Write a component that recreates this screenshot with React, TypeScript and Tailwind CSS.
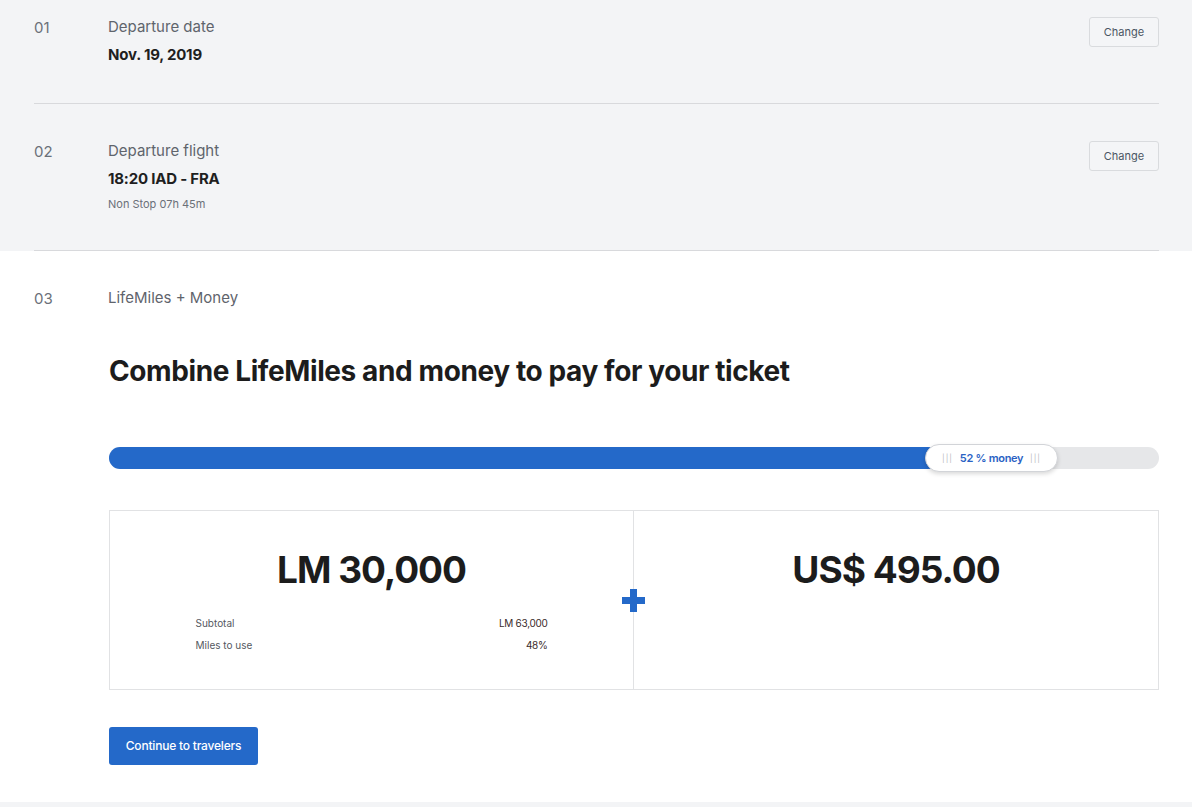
import React from "react";

const font = { fontFamily: "Inter, 'Liberation Sans', sans-serif" };

function ChangeButton() {
    return (
        <button className="h-[30px] w-[70px] rounded-[3px] border border-[#d9dbde] bg-[#f4f5f7] text-[11px] text-[#4b5563]">
            Change
        </button>
    );
}

function Step({ num, title, children, action }: { num: string; title: string; children?: React.ReactNode; action?: boolean }) {
    return (
        <div className="flex items-start">
            <div className="w-[74px] pt-[1px] text-[15px] leading-[20px] text-[#6b7079]">{num}</div>
            <div className="flex-1">
                <div className="text-[15px] leading-[20px] text-[#5f646c]">{title}</div>
                {children}
            </div>
            {action && <ChangeButton />}
        </div>
    );
}

export default function App() {
    return (
        <div className="min-h-[807px] bg-white" style={font}>
            <div className="bg-[#f3f4f6] pl-[34px] pr-[33px]">
                <div className="border-b border-[#d8d9dc] pb-[38px] pt-[17px]">
                    <Step num="01" title="Departure date" action>
                        <div className="mt-[8px] text-[15px] font-bold leading-[20px] tracking-[-0.2px] text-[#1f1f1f]">Nov. 19, 2019</div>
                    </Step>
                </div>
                <div className="border-b border-[#d8d9dc] pb-[39px] pt-[37px]">
                    <Step num="02" title="Departure flight" action>
                        <div className="mt-[8px] text-[15px] font-bold leading-[20px] tracking-[-0.2px] text-[#1f1f1f]">18:20 IAD - FRA</div>
                        <div className="mt-[8px] text-[11px] leading-[14px] text-[#6b7079]">Non Stop 07h 45m</div>
                    </Step>
                </div>
            </div>
            <div className="pl-[34px] pr-[33px] pt-[37px]">
                <Step num="03" title="LifeMiles + Money" />
                <div className="ml-[75px]">
                    <h1 className="mt-[44px] text-[28px] font-bold leading-[36px] tracking-[-0.4px] text-[#1c1c1c]">
                        Combine LifeMiles and money to pay for your ticket
                    </h1>
                    <div className="relative mt-[58px] h-[22px] rounded-full bg-[#e6e7e9]">
                        <div className="h-full w-[79%] rounded-full bg-[#2469c9]" />
                        <div className="absolute left-[816px] top-[-3px] flex h-[28px] w-[133px] items-center justify-between rounded-full border border-[#d2d4d8] bg-white px-[16px] shadow-[0_2px_4px_rgba(0,0,0,0.15)]">
                            <span className="text-[8px] tracking-[1px] text-[#b8bbc0]">|||</span>
                            <span className="text-[11px] font-semibold tracking-[-0.3px] text-[#2a62c4]">52 % money</span>
                            <span className="text-[8px] tracking-[1px] text-[#b8bbc0]">|||</span>
                        </div>
                    </div>
                    <div className="relative mt-[41px] grid h-[180px] grid-cols-2 border border-[#e1e2e4]">
                        <div className="flex flex-col items-center border-r border-[#e1e2e4] pt-[36px]">
                            <div className="text-[37px] font-bold leading-[46px] tracking-[-1px] text-[#1c1c1c]">LM 30,000</div>
                            <div className="mt-[23px] w-[352px] text-[10px] text-[#55595f]">
                                <div className="flex justify-between leading-[14px]">
                                    <span>Subtotal</span>
                                    <span className="text-[#3a2b2b] tracking-[-0.3px]">LM 63,000</span>
                                </div>
                                <div className="mt-[8px] flex justify-between leading-[14px]">
                                    <span>Miles to use</span>
                                    <span className="text-[#3a2b2b] tracking-[-0.3px]">48%</span>
                                </div>
                            </div>
                        </div>
                        <div className="flex flex-col items-center pt-[36px]">
                            <div className="text-[37px] font-bold leading-[46px] tracking-[-1px] text-[#1c1c1c]">US$ 495.00</div>
                        </div>
                        <svg className="absolute left-[512px] top-[78px]" width="23" height="23" viewBox="0 0 23 23">
                            <path d="M8 0h7v8h8v7h-8v8H8v-8H0V8h8z" fill="#2469c9" />
                        </svg>
                    </div>
                    <button className="mt-[37px] h-[38px] w-[149px] rounded-[3px] bg-[#2469c9] text-[12px] font-medium tracking-[-0.2px] text-white">
                        Continue to travelers
                    </button>
                </div>
            </div>
            <div className="mt-[37px] h-[6px] bg-[#f3f4f6]" />
        </div>
    );
}
